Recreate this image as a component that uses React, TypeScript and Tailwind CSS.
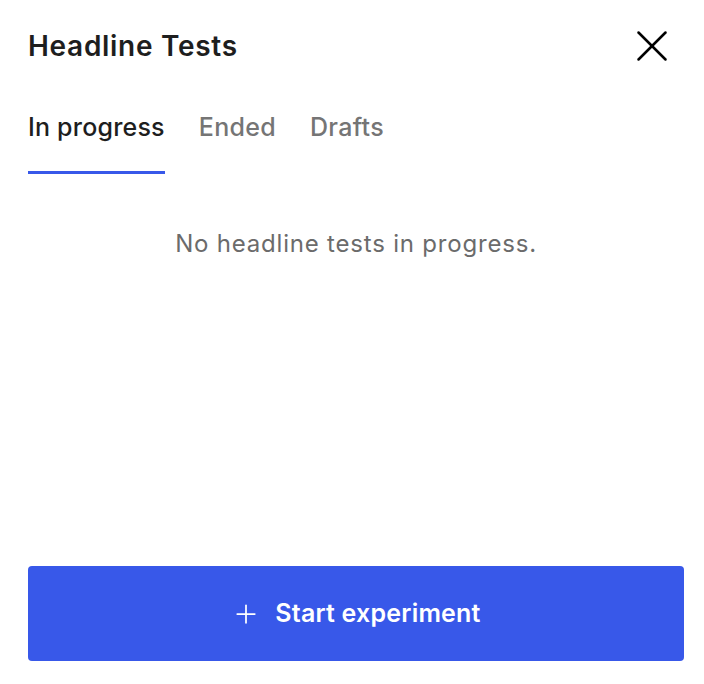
import { X, Plus } from "lucide-react";

const tabs = ["In progress", "Ended", "Drafts"];

export default function App() {
  const active = 0;

  return (
    <div className="flex h-[684px] w-full flex-col bg-white pl-[28px] pr-[20px] font-['Inter',sans-serif] text-[#1e1e1e]">
      <header className="flex items-center justify-between pt-[29px]">
        <h1 className="text-[28px] font-semibold leading-[34px] tracking-[0.7px]">Headline Tests</h1>
        <button className="mr-[5px] flex h-[34px] w-[54px] items-center justify-center text-black">
          <X size={54} strokeWidth={1.1} />
        </button>
      </header>

      <nav className="mt-[48px] flex gap-[34px]">
        {tabs.map((tab, i) => (
          <button
            key={tab}
            className={
              i === active
                ? "border-b-[3px] border-[#3858e9] pb-[28px] text-[25px] font-medium leading-[32px] tracking-[0.2px] text-[#1e1e1e]"
                : "border-b-[3px] border-transparent pb-[28px] text-[25px] font-medium leading-[32px] tracking-[0.3px] text-[#757575]"
            }
          >
            {tab}
          </button>
        ))}
      </nav>

      <p className="mt-[55px] text-center text-[24px] leading-[30px] tracking-[0.8px] text-[#6b6b6b]">
        No headline tests in progress.
      </p>

      <div className="flex-1" />

      <button className="mb-[23px] flex h-[95px] w-full items-center justify-center gap-[14px] rounded-[4px] bg-[#3858e9] text-[25px] font-semibold tracking-[0.2px] text-white">
        <Plus size={30} strokeWidth={1.4} />
        Start experiment
      </button>
    </div>
  );
}
